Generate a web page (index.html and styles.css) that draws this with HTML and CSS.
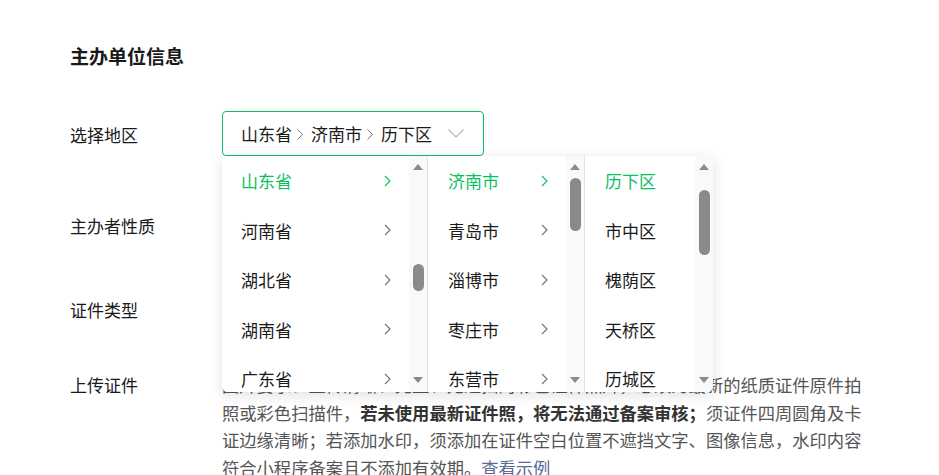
FILE: index.html
```html
<!DOCTYPE html>
<html lang="zh-CN">
<head>
<meta charset="utf-8">
<title>主办单位信息</title>
<link rel="stylesheet" href="styles.css">
</head>
<body>
<div class="page">
  <h2 class="title">主办单位信息</h2>
  <div class="form">
    <div class="row row-region">
      <div class="label">选择地区</div>
      <div class="field">
        <div class="picker">
          <div class="select">
            <span>山东省</span>
            <svg class="sep" viewBox="0 0 6 11"><path d="M0.5 0.5 L5.5 5.5 L0.5 10.5"/></svg>
            <span>济南市</span>
            <svg class="sep" viewBox="0 0 6 11"><path d="M0.5 0.5 L5.5 5.5 L0.5 10.5"/></svg>
            <span>历下区</span>
            <svg class="caret" viewBox="0 0 16 9"><path d="M0.5 0.5 L8 8 L15.5 0.5"/></svg>
          </div>
          <div class="dropdown">
            <div class="col col-prov">
              <ul class="list">
                <li class="item active"><span>山东省</span><svg class="chev" viewBox="0 0 7 12"><path d="M1 1 L6 6 L1 11"/></svg></li>
                <li class="item"><span>河南省</span><svg class="chev" viewBox="0 0 7 12"><path d="M1 1 L6 6 L1 11"/></svg></li>
                <li class="item"><span>湖北省</span><svg class="chev" viewBox="0 0 7 12"><path d="M1 1 L6 6 L1 11"/></svg></li>
                <li class="item"><span>湖南省</span><svg class="chev" viewBox="0 0 7 12"><path d="M1 1 L6 6 L1 11"/></svg></li>
                <li class="item"><span>广东省</span><svg class="chev" viewBox="0 0 7 12"><path d="M1 1 L6 6 L1 11"/></svg></li>
              </ul>
              <div class="track">
                <i class="arrow up"></i>
                <div class="rail"><div class="thumb" style="margin-top:86px;height:27px"></div></div>
                <i class="arrow down"></i>
              </div>
            </div>
            <div class="col col-city">
              <ul class="list">
                <li class="item active"><span>济南市</span><svg class="chev" viewBox="0 0 7 12"><path d="M1 1 L6 6 L1 11"/></svg></li>
                <li class="item"><span>青岛市</span><svg class="chev" viewBox="0 0 7 12"><path d="M1 1 L6 6 L1 11"/></svg></li>
                <li class="item"><span>淄博市</span><svg class="chev" viewBox="0 0 7 12"><path d="M1 1 L6 6 L1 11"/></svg></li>
                <li class="item"><span>枣庄市</span><svg class="chev" viewBox="0 0 7 12"><path d="M1 1 L6 6 L1 11"/></svg></li>
                <li class="item"><span>东营市</span><svg class="chev" viewBox="0 0 7 12"><path d="M1 1 L6 6 L1 11"/></svg></li>
              </ul>
              <div class="track">
                <i class="arrow up"></i>
                <div class="rail"><div class="thumb" style="margin-top:0px;height:53px"></div></div>
                <i class="arrow down"></i>
              </div>
            </div>
            <div class="col col-dist">
              <ul class="list">
                <li class="item active"><span>历下区</span></li>
                <li class="item"><span>市中区</span></li>
                <li class="item"><span>槐荫区</span></li>
                <li class="item"><span>天桥区</span></li>
                <li class="item"><span>历城区</span></li>
              </ul>
              <div class="track">
                <i class="arrow up"></i>
                <div class="rail"><div class="thumb" style="margin-top:12px;height:65px"></div></div>
                <i class="arrow down"></i>
              </div>
            </div>
          </div>
        </div>
      </div>
    </div>
    <div class="row row-nature">
      <div class="label">主办者性质</div>
    </div>
    <div class="row row-type">
      <div class="label">证件类型</div>
    </div>
    <div class="row row-upload">
      <div class="label">上传证件</div>
      <p class="desc">图片要求：上传清晰、完整、无遮挡的彩色证件照片，必须为最新的纸质证件原件拍照或彩色扫描件，<strong>若未使用最新证件照，将无法通过备案审核；</strong>须证件四周圆角及卡证边缘清晰；若添加水印，须添加在证件空白位置不遮挡文字、图像信息，水印内容符合小程序备案且不添加有效期。<a class="link" href="#">查看示例</a></p>
    </div>
  </div>
</div>
</body>
</html>
```

FILE: styles.css
```css
body {
  margin: 0;
  background: #fff;
  font-family: "Noto Sans CJK SC", "Noto Sans", sans-serif;
  color: #1a1a1a;
}

.page {
  padding: 42px 0 0 70px;
}

.title {
  margin: 0;
  font-size: 19px;
  font-weight: 700;
  line-height: 28px;
}

.form {
  margin-top: 41px;
}

.row {
  display: flex;
  align-items: flex-start;
}

.label {
  width: 152px;
  flex: none;
  font-size: 17px;
  line-height: 28px;
}

.row-region .label {
  margin-top: 10px;
}

.row-nature {
  margin-top: 56px;
  height: 28px;
}

.row-type {
  margin-top: 56px;
  height: 28px;
}

.row-upload {
  margin-top: 47px;
}

.row-upload .label {
  line-height: 27.5px;
}

.picker {
  position: relative;
}

.select {
  box-sizing: border-box;
  width: 262px;
  height: 45px;
  border: 1px solid #07c160;
  border-radius: 4px;
  display: flex;
  align-items: center;
  padding-left: 18px;
  font-size: 17px;
  color: #1a1a1a;
}

.sep {
  width: 6px;
  height: 11px;
  margin: 1px 8px 0 5px;
  fill: none;
  stroke: #777;
  stroke-width: 1;
}

.caret {
  width: 16px;
  height: 9px;
  margin-left: 16px;
  fill: none;
  stroke: #b8b8b8;
  stroke-width: 1.2;
}

.dropdown {
  position: absolute;
  top: 100%;
  left: 0;
  width: 491px;
  height: 236px;
  display: flex;
  background: #fff;
  border-radius: 6px;
  box-shadow: 0 3px 14px rgba(0, 0, 0, 0.13);
  overflow: hidden;
  z-index: 2;
}

.col {
  display: flex;
  box-sizing: border-box;
  height: 100%;
}

.col-prov {
  width: 206px;
  border-right: 1px solid #e3e3e3;
}

.col-city {
  width: 157px;
  border-right: 1px solid #e3e3e3;
}

.col-dist {
  width: 128px;
}

.list {
  flex: 1;
  margin: 0;
  padding: 0;
  list-style: none;
  overflow: hidden;
}

.item {
  height: 49.5px;
  display: flex;
  align-items: center;
  justify-content: space-between;
  font-size: 17px;
  padding: 0 18px 0 20px;
  color: #1a1a1a;
}

.col-prov .item {
  padding-left: 19px;
}

.item.active {
  color: #07c160;
}

.chev {
  width: 7px;
  height: 12px;
  fill: none;
  stroke: #707070;
  stroke-width: 1.1;
}

.item.active .chev {
  stroke: #07c160;
}

.track {
  width: 18px;
  flex: none;
  background: #f9f9f9;
  display: flex;
  flex-direction: column;
  align-items: center;
}

.arrow {
  display: block;
  width: 0;
  height: 0;
  border-left: 5px solid transparent;
  border-right: 5px solid transparent;
}

.arrow.up {
  margin-top: 8px;
  margin-bottom: 8px;
  border-bottom: 6px solid #8a8a8a;
}

.arrow.down {
  margin-top: 8px;
  margin-bottom: 9px;
  border-top: 6px solid #8a8a8a;
}

.rail {
  flex: 1;
  width: 100%;
  display: flex;
  justify-content: center;
}

.thumb {
  width: 11px;
  border-radius: 6px;
  background: #8a8a8a;
}

.desc {
  margin: 0;
  width: 645px;
  font-size: 17.3px;
  line-height: 27.5px;
  color: #555;
}

.desc strong {
  color: #333;
  font-weight: 700;
}

.link {
  color: #576b95;
  text-decoration: none;
}
```
